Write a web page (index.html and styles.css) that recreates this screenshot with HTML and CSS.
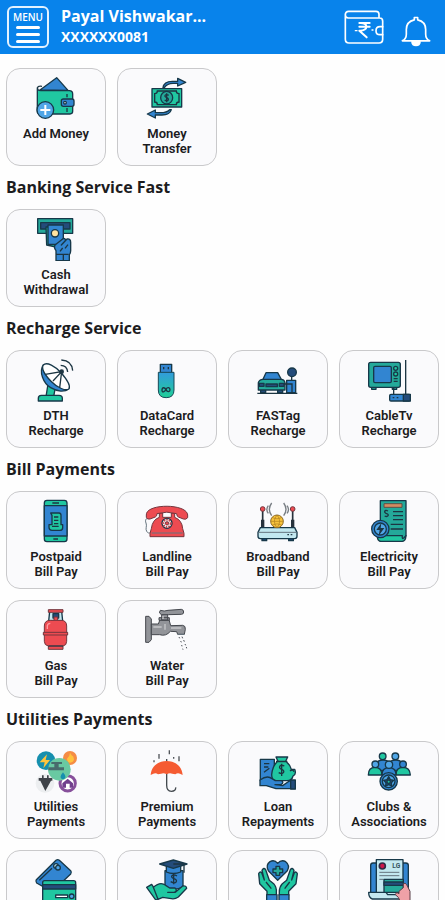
FILE: index.html
```
<!DOCTYPE html>
<html lang="en">
<head>
    <meta charset="UTF-8">
    <meta name="viewport" content="width=device-width, initial-scale=1.0">
    <title>Services</title>
    <link rel="stylesheet" href="styles.css">
</head>
<body>
    <header class="topbar">
        <button class="menu-btn" type="button">
            <span class="menu-text">MENU</span>
            <span class="bar"></span>
            <span class="bar"></span>
            <span class="bar"></span>
        </button>
        <div class="user">
            <div class="user-name">Payal Vishwakar...</div>
            <div class="user-phone">XXXXXX0081</div>
        </div>
        <button class="icon-btn" type="button" aria-label="Wallet">
            <svg class="wallet-icon" viewBox="0 0 120 102" fill="none" stroke="#fff" stroke-width="5" stroke-linejoin="round" stroke-linecap="round">
                <path d="M4 12v76q0 11 11 11h90q11 0 11-11V74M116 50V33q0-9-9-9H13q-9 0-9-9 0-11 10-11h82q9 0 9 9v11"/>
                <path d="M116 50h-8q-12 0-12 12t12 12h8z"/>
                <path d="M46 39h31M46 50h31M47 39c27-2 27 24 0 23h-1l22 20" stroke-width="6"/>
                <path d="M34 62h5M84 60h3" stroke-width="4"/>
            </svg>
        </button>
        <button class="icon-btn" type="button" aria-label="Notifications">
            <svg class="bell-icon" viewBox="0 0 90 92" fill="none" stroke="#fff" stroke-width="5" stroke-linejoin="round">
                <path d="M4 74c8-4 12-10 12-20V40c0-16 10-26 24-29V4h10v7c14 3 24 13 24 29v14c0 10 4 16 12 20z"/>
                <path d="M33 77h24c-1 14-23 14-24 0z" fill="#fff"/>
            </svg>
        </button>
    </header>

    <main class="content">
        <section class="grid">
            <button class="card" type="button">
                <svg class="icon" viewBox="0 0 132 132">
                    <path class="blue" d="M18 42 68 5l34 38z"/>
                    <path class="green" d="M10 36q0 8 10 8h86q10 0 10 10v52q0 8-8 8H18q-8 0-8-8z"/>
                    <path class="line" d="M10 36q2-7 14-5M99 54v10M99 96v12"/>
                    <rect class="blue" x="82" y="69" width="38" height="22" rx="6"/>
                    <circle class="white" cx="93" cy="80" r="4"/>
                    <circle class="sky" cx="34" cy="102" r="25"/>
                    <path class="plus" d="M34 87v30M19 102h30"/>
                </svg>
                <span class="label">Add Money</span>
            </button>
            <button class="card" type="button">
                <svg class="icon" viewBox="0 0 132 132">
                    <path class="blue" d="M54 35c2-14 12-19 28-19h16V7l24 12-24 11v-8H84c-12 0-20 4-26 13z"/>
                    <path class="blue" d="M79 101c-4 14-14 16-28 16H31v9L7 114l24-12v8h16c14 0 20-2 27-9z"/>
                    <rect class="green" x="21" y="38" width="89" height="55"/>
                    <path class="line" d="M29 53q8 0 8-8h57q0 8 8 8v25q-8 0-8 8H37q0-8-8-8z"/>
                    <ellipse class="teal" cx="65" cy="65" rx="18" ry="19"/>
                    <path class="line" d="M71 58c-10-7-16 4-6 7s4 14-6 7M65 52v27"/>
                </svg>
                <span class="label">Money<br>Transfer</span>
            </button>
        </section>

        <h2>Banking Service Fast</h2>
        <section class="grid">
            <button class="card" type="button">
                <svg class="icon" viewBox="0 0 132 132">
                    <path class="teal" d="M11 5h105v44H11z"/>
                    <path class="navy" d="M20 17h88v19H20z"/>
                    <path class="green" d="M36 30h14v52h22l-6 8-28-6z"/>
                    <path class="blue" d="M42 24h46v58H42z"/>
                    <circle class="cream" cx="63" cy="49" r="11"/>
                    <path class="blue" d="M66 131v-30q-8-10-2-18l23-18q8-2 7 6L82 84l17-18q11-2 11 10v25q0 8-4 12v18z"/>
                    <path class="line" d="M66 112h38M78 103l8-10M93 94l9-11M88 112v18"/>
                </svg>
                <span class="label">Cash<br>Withdrawal</span>
            </button>
        </section>

        <h2>Recharge Service</h2>
        <section class="grid">
            <button class="card" type="button">
                <svg class="icon" viewBox="0 0 132 132">
                    <path class="green" d="m42 78 22 10-5 28H36z"/>
                    <path class="green" d="M13 129v-8q0-9 9-9h53q10 0 10 9v8z"/>
                    <path class="blue" d="M28 21c-14 20 0 55 22 68 20 12 42 14 55 3z"/>
                    <path class="white" d="M28 21c10-11 36 4 54 24 17 20 29 37 23 47-8 9-36-3-54-22S20 33 28 21z"/>
                    <path class="line" d="m57 69 26-28M34 49l49-8-6 48"/>
                    <circle class="dark" cx="83" cy="41" r="7"/>
                    <path class="line" d="M80 22q19 0 21 20M82 6q32 2 34 32"/>
                </svg>
                <span class="label">DTH<br>Recharge</span>
            </button>
            <button class="card" type="button">
                <svg class="icon" viewBox="0 0 132 132">
                    <defs>
                        <linearGradient id="stick" x2="0" y2="1">
                            <stop stop-color="#329bdc"/>
                            <stop offset="1" stop-color="#20cf97"/>
                        </linearGradient>
                    </defs>
                    <rect class="blue" x="46" y="19" width="34" height="26"/>
                    <path class="line" d="M56 27v7M70 27v7"/>
                    <path d="M40 43h47v53q0 23-23.500 23T40 96z" fill="url(#stick)" stroke="#174957" stroke-width="3"/>
                    <path class="line" d="M51 97c0-10 8-10 12-2s12 7 12 0-8-9-12-1-12 11-12 3z"/>
                </svg>
                <span class="label">DataCard<br>Recharge</span>
            </button>
            <button class="card" type="button">
                <svg class="icon" viewBox="0 0 132 132">
                    <path class="line" d="M4 106h120"/>
                    <path class="navy" d="M14 88h15v16H14zM65 88h15v16H65z"/>
                    <path class="blue" d="m20 66 10-22h35l12 22z"/>
                    <path class="teal" d="M7 74q3-10 14-10h55q9 0 11 10v22H7z"/>
                    <path class="navy" d="M10 76h14v9H10zM70 76h14v9H70zM30 78h34v8H30z"/>
                    <path class="line" d="M107 55v13"/>
                    <circle class="navy" cx="108" cy="43" r="13"/>
                    <path class="blue" d="M92 67h27v37H92z"/>
                    <path class="line" d="M84 78h24v26"/>
                </svg>
                <span class="label">FASTag<br>Recharge</span>
            </button>
            <button class="card" type="button">
                <svg class="icon" viewBox="0 0 132 132">
                    <path class="teal" d="M14 87v7h13v-7M76 87v7h13v-7"/>
                    <rect class="teal" x="5" y="13" width="95" height="75" rx="6"/>
                    <rect class="blue" x="20" y="25" width="53" height="49" rx="4"/>
                    <circle class="green" cx="86" cy="31" r="6"/>
                    <circle class="green" cx="86" cy="48" r="6"/>
                    <path class="line" d="M80 62h12M80 70h12M80 90v18M116 6v102"/>
                    <rect class="blue" x="68" y="109" width="62" height="20" rx="4"/>
                    <path class="navy" d="M109 109h21v20h-21z"/>
                    <path class="line" d="M77 119h5M89 119h5"/>
                </svg>
                <span class="label">CableTv<br>Recharge</span>
            </button>
        </section>

        <h2>Bill Payments</h2>
        <section class="grid">
            <button class="card" type="button">
                <svg class="icon" viewBox="0 0 132 132">
                    <rect class="green" x="31" y="4" width="68" height="124" rx="8"/>
                    <path class="blue" d="M31 20h68v91H31z"/>
                    <path class="line" d="M55 12h20M58 120h14"/>
                    <path class="green" d="M50 42h25q6 0 6 7v28h5v9q0 8-9 8H54q-9 0-9-9v-8h9V49z"/>
                    <path class="line" d="M60 54h13M60 64h13M60 74h13M54 82h20"/>
                </svg>
                <span class="label">Postpaid<br>Bill Pay</span>
            </button>
            <button class="card" type="button">
                <svg class="icon" viewBox="0 0 132 132">
                    <path class="thin" d="M15 59C4 54-1 63 3 72s-3 17 2 25 10 5 15 1"/>
                    <path class="red" d="M43 42h10v13h26V42h10v13q22 8 24 34l4 14v10H15v-10l4-14q3-27 24-34z"/>
                    <path class="red" d="M4 48c-2-35 122-35 124 0v8q-5 7-13 4l-15-6q-5-2-5-10-30-9-59 0 0 8-5 10l-16 6q-9 2-11-5z"/>
                    <circle class="white" cx="66" cy="73" r="15"/>
                    <circle cx="66" cy="73" r="11" fill="none" stroke="#bd4951" stroke-width="6" stroke-dasharray="5 3"/>
                    <circle class="red" cx="66" cy="73" r="5"/>
                    <path class="thin" d="M20 102h93"/>
                </svg>
                <span class="label">Landline<br>Bill Pay</span>
            </button>
            <button class="card" type="button">
                <svg class="icon" viewBox="0 0 132 132">
                    <path d="M20 36v52M110 36v52" stroke="#27323c" stroke-width="5"/>
                    <path d="M20 62v28M110 62v28" stroke="#27323c" stroke-width="10"/>
                    <circle class="red" cx="20" cy="30" r="7"/>
                    <circle class="red" cx="110" cy="30" r="7"/>
                    <path class="wave" d="M37 20q-9 11 0 23M47 12q-14 19 0 38M93 20q9 11 0 23M83 12q14 19 0 38"/>
                    <path class="navy" d="M18 116h14v9H18zM98 116h14v9H98z"/>
                    <path class="ice" d="m13 86-7 14v12q0 7 7 7h103q7 0 7-7v-12l-7-14z"/>
                    <path class="thin" d="M7 100h115"/>
                    <circle class="yellow" cx="63" cy="67" r="19"/>
                    <path d="M44 67h38M49 56q14 7 28 0M49 78q14-7 28 0M63 48q-16 19 0 38M63 48q16 19 0 38" fill="none" stroke="#ad7c1c" stroke-width="2"/>
                    <path d="M94 107h5M104 107h5" stroke="#263e49" stroke-width="4"/>
                </svg>
                <span class="label">Broadband<br>Bill Pay</span>
            </button>
            <button class="card" type="button">
                <svg class="icon" viewBox="0 0 132 132">
                    <path class="teal" d="M40 5h77v105l-12 17H40z"/>
                    <path class="green" d="M31 110h75q-2 17 11 0-1 17-13 17H43q-12 0-12-17z"/>
                    <path class="orange" d="M51 14h54v11H51z"/>
                    <path class="line" d="M78 38h30M78 50h30M78 62h30M71 76h37M71 90h37M63 36c-12-6-13 6-4 8s4 12-6 7"/>
                    <circle class="blue" cx="40" cy="90" r="26"/>
                    <circle class="sky" cx="40" cy="90" r="18"/>
                    <path class="dark" d="M43 72 28 93h10l-3 17 17-23H41z"/>
                </svg>
                <span class="label">Electricity<br>Bill Pay</span>
            </button>
            <button class="card" type="button">
                <svg class="icon" viewBox="0 0 132 132">
                    <path class="ice" d="M47 10h36l3 29H44z"/>
                    <path class="navy" d="M57 17h17v13H57z"/>
                    <path class="red" d="M43 5h44v8H43zM60 27h11v12H60z"/>
                    <path class="red" d="M31 54q0-17 18-17h32q17 0 17 17v46q0 12-11 14v10H43v-10q-12-2-12-14z"/>
                    <path d="M40 63V53q1-7 9-7" fill="none" stroke="#ff9aa0" stroke-width="4"/>
                    <path class="red" d="M28 73h73v8H28z"/>
                    <path class="line" d="M43 114h44"/>
                </svg>
                <span class="label">Gas<br>Bill Pay</span>
            </button>
            <button class="card" type="button">
                <svg class="icon" viewBox="0 0 132 132">
                    <path class="grey" d="M2 25h10l7 8v62l-7 8H2z"/>
                    <path class="grey" d="M19 48h21l5-13h27l5 18 36-1q9 1 8 12l-3 15H98l-3-8-19-1q-13 16-32 10H19z"/>
                    <path class="grey" d="M50 17h18v19H50zM42 29h31v8H42z"/>
                    <path class="grey" d="M46 7q12 4 23 0l40-3q7 1 7 8t-7 7l-38 1H49q-10-5-3-13z"/>
                    <path d="M25 57h25M54 24v9M60 48v17M78 60h31" stroke="#c7c8ca" stroke-width="4"/>
                    <path class="thin" d="M98 79h20"/>
                    <path d="m102 87 2 4m7-5 2 5m-6 8 2 4m7-7 2 5m-8 10 1 4m9-7 2 4m-9 10 1 3m10-8 1 4" stroke="#4c5158" stroke-width="3"/>
                </svg>
                <span class="label">Water<br>Bill Pay</span>
            </button>
        </section>

        <h2>Utilities Payments</h2>
        <section class="grid">
            <button class="card" type="button">
                <svg class="icon" viewBox="0 0 132 132">
                    <circle cx="36" cy="35" r="28" fill="#168fae"/>
                    <circle cx="108" cy="27" r="21" fill="#f58c45"/>
                    <path d="M108 11q-1 12-9 18 1 12 10 12t11-10q-1-10-7-12z" fill="#ffc23c"/>
                    <circle cx="33" cy="103" r="28" fill="#eceef0"/>
                    <circle cx="101" cy="103" r="23" fill="#fff" stroke="#87509b" stroke-width="9"/>
                    <circle cx="76" cy="61" r="34" fill="#69c9a2"/>
                    <path d="m39 16-22 24h15l-4 18 20-25H35z" fill="#ffc43b"/>
                    <path d="M43 55h18V45h-9v-6h32v6H74v10h16v9H43z" fill="#486b6c"/>
                    <path d="M87 70q-15 18 0 21 15-3 0-21z" fill="#168fae"/>
                    <path d="M14 87h41v8h-4L34 126 19 95h-5zM24 79h5v8h-5zM39 79h5v8h-5z" fill="#3e4248"/>
                    <path d="m85 103 16-14 16 14v13h-10v-12h-11v12H85z" fill="#71408d"/>
                </svg>
                <span class="label">Utilities<br>Payments</span>
            </button>
            <button class="card" type="button">
                <svg class="icon" viewBox="0 0 132 132">
                    <path d="M65 30v79q0 18 14 18t13-12" fill="none" stroke="#444a4f" stroke-width="4"/>
                    <path d="M17 78C19 52 39 36 65 36s46 16 48 42l-8-4q-8-3-14 2l-9-2q-9-3-17 2-8-5-17-2l-9 2q-6-5-14-2z" fill="#f55b32"/>
                    <path d="M42 15v14M73 4v12M102 22v15M27 34v6M86 24v5" stroke="#505459" stroke-width="4"/>
                </svg>
                <span class="label">Premium<br>Payments</span>
            </button>
            <button class="card" type="button">
                <svg class="icon" viewBox="0 0 132 132">
                    <path class="blue" d="M13 31h42v64H13z"/>
                    <path class="line" d="M24 44h16M24 54h13M24 70l16-12"/>
                    <path class="green" d="m67 39-7-15h35l-7 15z"/>
                    <path class="green" d="M64 38h27q12 10 15 23h10q6 15-5 20-3 14-18 14H61q-14 0-14-18 3-28 17-39z"/>
                    <path class="line" d="M85 51c-14-7-20 6-8 10s6 18-9 10M77 44v37"/>
                    <path class="line" d="M102 66q8-7 12 2M60 37h34"/>
                    <path class="blue" d="M12 93q22-16 36-4l10 6h19q8 6-2 12H57l23 3 20-14h18v23H60l-29-9H12z"/>
                    <path class="navy" d="M104 93h14v27h-14z"/>
                </svg>
                <span class="label">Loan<br>Repayments</span>
            </button>
            <button class="card" type="button">
                <svg class="icon" viewBox="0 0 132 132">
                    <path class="blue" d="M28 64V44q5-11 20-11t18 11q5-11 20-11t19 11v20z"/>
                    <circle class="green" cx="47" cy="22" r="10"/>
                    <circle class="sky" cx="85" cy="22" r="10"/>
                    <path class="green" d="M4 78q0-23 20-23t21 23zM87 78q0-23 21-23t22 23z"/>
                    <path class="blue" d="M45 78q0-22 21-22t21 22z"/>
                    <circle class="sky" cx="25" cy="46" r="10"/>
                    <circle class="sky" cx="66" cy="47" r="11"/>
                    <circle class="blue" cx="108" cy="46" r="10"/>
                    <circle class="blue" cx="65" cy="97" r="26"/>
                    <circle class="sky" cx="65" cy="97" r="19"/>
                    <path class="navy" d="m65 83 5 9 10 2-7 7 1 10-9-4-9 4 1-10-7-7 10-2z"/>
                    <circle class="green" cx="65" cy="98" r="5"/>
                </svg>
                <span class="label">Clubs &amp;<br>Associations</span>
            </button>
            <button class="card" type="button" aria-label="Cards">
                <svg class="icon" viewBox="0 0 132 132">
                    <path class="blue" d="M7 65 66 7q5-4 10 0l34 31q4 5 0 10L54 101 8 75q-4-5-1-10z"/>
                    <path class="line" d="m16 67 38-36"/>
                    <circle class="ice" cx="66" cy="24" r="7"/>
                    <circle class="sky" cx="72" cy="29" r="7"/>
                    <rect class="green" x="26" y="68" width="99" height="70" rx="6"/>
                    <path class="navy" d="M26 80h99v13H26z"/>
                    <path class="white" d="M65 111h36v8H65z"/>
                    <circle class="sky" cx="113" cy="115" r="7"/>
                </svg>
            </button>
            <button class="card" type="button" aria-label="Education">
                <svg class="icon" viewBox="0 0 132 132">
                    <path class="blue" d="M60 38h54v49q-27 13-54 0z"/>
                    <path class="blue" d="M64 22h43v20q-22 9-43 0z"/>
                    <path class="navy" d="m44 18 41-12 41 12-41 13z"/>
                    <path d="M85 18h32v26" fill="none" stroke="#1c3542" stroke-width="4"/>
                    <path class="line" d="M96 54c-14-9-23 4-9 8s7 19-10 9M86 45v34"/>
                    <path class="green" d="m5 88 15-9 26 38-13 10z"/>
                    <path class="green" d="M25 88q21-19 37-6l12 8h16q9 8-2 13H68h23l22-19q11-2 12 7l-25 26q-10 7-21 5l-26-4-14 6z"/>
                </svg>
            </button>
            <button class="card" type="button" aria-label="Donation">
                <svg class="icon" viewBox="0 0 132 132">
                    <path class="blue" d="M65 67 37 38q-9-17 5-27 13-7 23 5 11-12 24-5 14 11 5 27z"/>
                    <path class="teal" d="M60 25h11v8h9v11h-9v8H60v-8h-9V33h9z"/>
                    <path class="green" d="M33 112v-12L11 77 8 47q3-8 9-3l8 22-7-29q5-10 11-2l11 32 13 10q9 10 8 25v10zM98 112v-12l22-23 4-30q-3-8-9-3l-8 22 7-29q-5-10-11-2L92 67 79 77q-9 10-9 25v10z"/>
                    <path class="line" d="m30 72 16 20M101 72 86 92"/>
                    <path class="blue" d="M32 110h31v25H32zM69 110h30v25H69z"/>
                </svg>
            </button>
            <button class="card" type="button" aria-label="Documents">
                <svg class="icon" viewBox="0 0 132 132">
                    <path class="blue" d="M11 22q0-7 7-7h98q8 0 8 7v84H11z"/>
                    <path class="ice" d="M28 5h80v110H28z"/>
                    <circle cx="46" cy="24" r="9" fill="#cc174c" stroke="#322b46" stroke-width="5"/>
                    <text class="doc-text" x="76" y="30">LG</text>
                    <path class="thin" d="M37 43h60M37 53h60M37 64h12"/>
                    <path class="ice" d="M5 103h52l5 7h59v13H16q-11-3-11-20z"/>
                    <path class="teal" d="M51 64h58v39H51z"/>
                    <path class="navy" d="M51 72h58v10H51z"/>
                    <path d="m96 100 13-11V78q5-6 10 2l10 20v35h-27l-8-17-9-8q2-9 11-3z" fill="#efa1a7" stroke="#583f49" stroke-width="3"/>
                </svg>
            </button>
        </section>
    </main>
</body>
</html>
```
FILE: styles.css
```
* {
    margin: 0;
    padding: 0;
    box-sizing: border-box;
}

body {
    height: 100vh;
    display: flex;
    flex-direction: column;
    background: #fefefe;
    color: #1c1c1e;
    font-family: 'Open Sans', 'Noto Sans', sans-serif;
}

button {
    border: none;
    background: none;
    color: inherit;
    font-family: inherit;
    cursor: pointer;
}

.topbar {
    flex-shrink: 0;
    display: flex;
    align-items: center;
    gap: 12px;
    height: 54px;
    padding: 0 14px 0 7px;
    background: #0883eb;
    color: #fff;
}

.menu-btn {
    width: 42px;
    height: 42px;
    display: flex;
    flex-direction: column;
    align-items: center;
    gap: 4px;
    padding-top: 4px;
    border: 2px solid #e3f2ff;
    border-radius: 6px;
}

.menu-text {
    font-family: 'Open Sans', sans-serif;
    font-size: 10px;
    font-weight: 600;
    line-height: 10px;
}

.bar {
    width: 24px;
    height: 3px;
    border-radius: 2px;
    background: #fff;
}

.user {
    flex: 1;
    min-width: 0;
    padding-bottom: 3px;
    font-weight: 700;
    white-space: nowrap;
}

.user-name {
    font-size: 16px;
    line-height: 22px;
}

.user-phone {
    font-size: 14px;
    line-height: 20px;
}

.icon-btn {
    display: flex;
    margin-left: 5px;
}

.wallet-icon {
    width: 40px;
    height: 34px;
}

.bell-icon {
    width: 30px;
    height: 31px;
    margin-top: 8px;
}

.content {
    flex: 1;
    min-height: 0;
    padding: 14px 6px;
    overflow-y: auto;
    scrollbar-width: none;
}

h2 {
    font-size: 16px;
    font-weight: 700;
    line-height: 43px;
}

.grid {
    display: grid;
    grid-template-columns: repeat(4, 1fr);
    gap: 11px;
}

.card {
    height: 98px;
    display: flex;
    flex-direction: column;
    align-items: center;
    gap: 6px;
    padding-top: 7px;
    border: 1px solid #c9c9cb;
    border-radius: 14px;
    background: #fafafc;
}

.icon {
    width: 44px;
    height: 44px;
    flex-shrink: 0;
}

.label {
    font-family: Roboto, 'Liberation Sans', sans-serif;
    font-size: 13px;
    font-weight: 600;
    line-height: 15px;
}

/* icon colours */
.blue, .sky, .green, .teal, .navy, .ice, .cream, .white {
    stroke: #173849;
    stroke-width: 4;
    stroke-linejoin: round;
}

.blue {
    fill: #3285d1;
}

.sky {
    fill: #50a6e7;
}

.green {
    fill: #20c7a1;
}

.teal {
    fill: #24a99a;
}

.navy {
    fill: #244c7b;
}

.ice {
    fill: #c3e8f0;
}

.cream {
    fill: #ffe3a0;
}

.white {
    fill: #fff;
}

.dark {
    fill: #1c3542;
}

.red {
    fill: #ed4b51;
    stroke: #74363e;
    stroke-width: 3;
}

.yellow {
    fill: #f7c33b;
    stroke: #8d6a26;
    stroke-width: 3;
}

.orange {
    fill: #d58b61;
    stroke: #5b5148;
    stroke-width: 3;
}

.grey {
    fill: #929499;
    stroke: #45484e;
    stroke-width: 3;
}

.line {
    fill: none;
    stroke: #1c3542;
    stroke-width: 4;
}

.thin {
    fill: none;
    stroke: #65747e;
    stroke-width: 3;
}

.wave {
    fill: none;
    stroke: #777d83;
    stroke-width: 4;
}

.plus {
    stroke: #fff;
    stroke-width: 6;
}

.doc-text {
    fill: #36535e;
    font-family: Roboto, sans-serif;
    font-size: 20px;
    font-weight: 700;
}
```
